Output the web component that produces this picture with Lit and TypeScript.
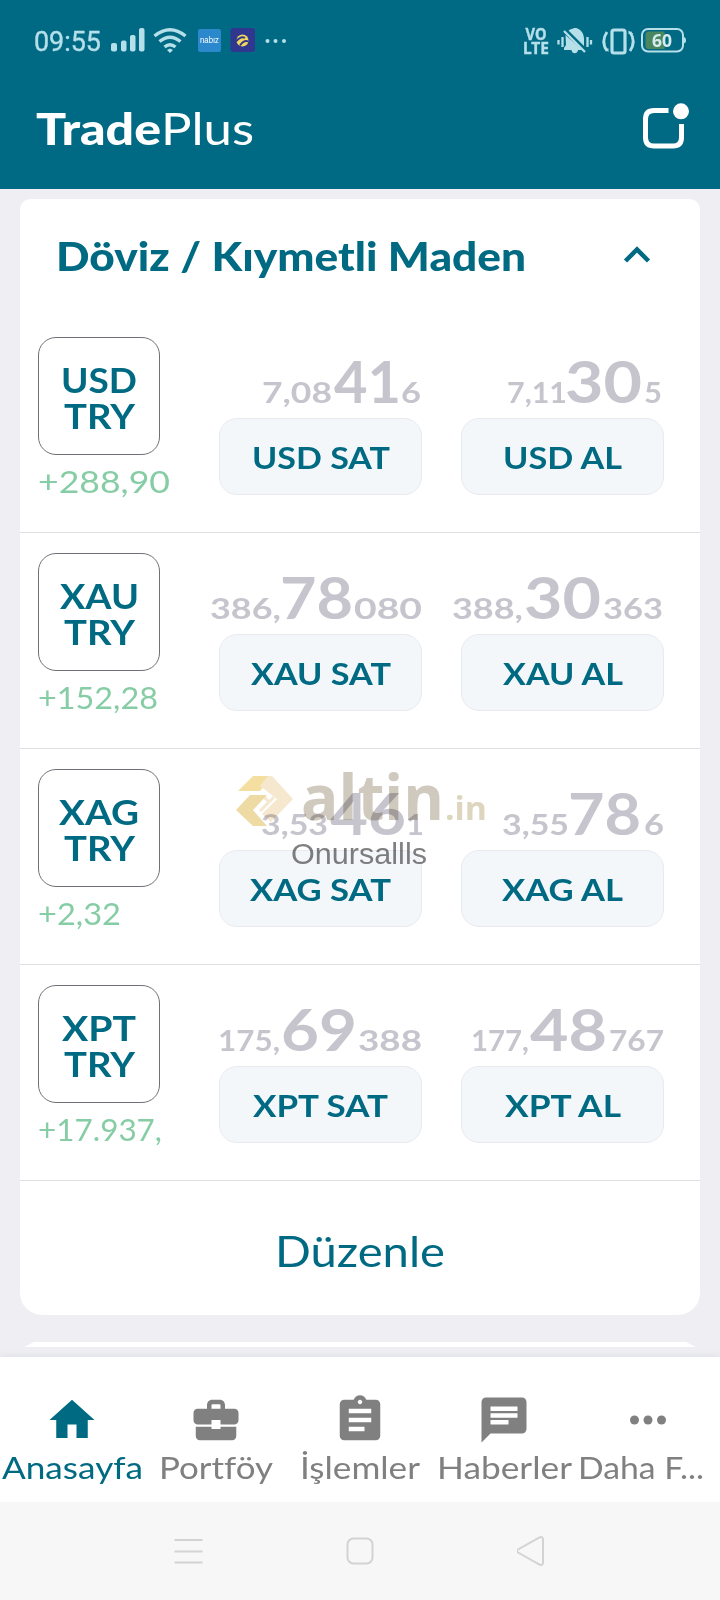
import { LitElement, html, svg, css } from "lit";
import { customElement, property } from "lit/decorators.js";

type Run = [text: string, x: number, width: number];

interface Pair {
  base: string;
  change: string;
  changeWidth: number;
  baseWidth: number;
  sell: Run[];
  buy: Run[];
  sellWidth: number;
  buyWidth: number;
}

// Run positions are measured from the left edge of the quote column.
const PAIRS: Pair[] = [
  {
    base: "USD", baseWidth: 76, change: "+288,90", changeWidth: 132, sellWidth: 138, buyWidth: 119,
    sell: [["7,08", 62, 70], ["41", 134, 67], ["6", 201, 20]],
    buy: [["7,11", 65, 60], ["30", 123, 77], ["5", 202, 18]],
  },
  {
    base: "XAU", baseWidth: 79, change: "+152,28", changeWidth: 120, sellWidth: 140, buyWidth: 120,
    sell: [["386,", 10, 71], ["78", 80, 73], ["080", 154, 68]],
    buy: [["388,", 10, 71], ["30", 82, 77], ["363", 161, 60]],
  },
  {
    base: "XAG", baseWidth: 80, change: "+2,32", changeWidth: 83, sellWidth: 141, buyWidth: 121,
    sell: [["3,53", 61, 67], ["46", 130, 76], ["1", 206, 18]],
    buy: [["3,55", 60, 67], ["78", 126, 73], ["6", 202, 20]],
  },
  {
    base: "XPT", baseWidth: 74, change: "+17.937,", changeWidth: 124, sellWidth: 135, buyWidth: 116,
    sell: [["175,", 18, 62], ["69", 81, 76], ["388", 158, 64]],
    buy: [["177,", 29, 58], ["48", 88, 77], ["767", 167, 55]],
  },
];

const TABS = [
  { name: "Anasayfa", width: 141, icon: svg`<path d="M10 20v-6h4v6h5v-8h3L12 3 2 12h3v8z"/>` },
  { name: "Portföy", width: 114, icon: svg`<path d="M10 16v-1H3l.01 4.2c0 1 .8 1.8 1.8 1.8h14.4c1 0 1.8-.8 1.8-1.8V15h-7v1zM20.2 7H16V5.6C16 4 15.2 3 13.6 3h-3.2C8.800 3 8 4 8 5.600V7H3.800C2.800 7 2 7.800 2 8.800v3.300c0 1.050.850 1.900 1.900 1.900H10v-2h4v2h6.100c1.050 0 1.900-.850 1.900-1.900V8.800C22 7.800 21.200 7 20.200 7zM14 7h-4V5.700c0-.500.200-.700.700-.700h2.600c.500 0 .700.200.700.700z"/>` },
  { name: "İşlemler", width: 120, icon: svg`<path d="M19 3h-4.180C14.400 1.840 13.300 1 12 1s-2.400.840-2.820 2H5c-1.100 0-2 .900-2 2v14c0 1.100.900 2 2 2h14c1.100 0 2-.900 2-2V5c0-1.100-.900-2-2-2zm-7 0c.550 0 1 .450 1 1s-.450 1-1 1-1-.450-1-1 .450-1 1-1zm2 14H7v-2h7v2zm3-4H7v-2h10v2zm0-4H7V7h10v2z"/>` },
  { name: "Haberler", width: 135, icon: svg`<path d="M20 2H4c-1.100 0-2 .900-2 2v18l4-4h14c1.100 0 2-.900 2-2V4c0-1.100-.900-2-2-2zM6 6h12v2H6zm8 8H6v-2h8zm4-3H6V9h12z"/>` },
  { name: "Daha F...", width: 126, icon: svg`<circle cx="6" cy="12" r="2"/><circle cx="12" cy="12" r="2"/><circle cx="18" cy="12" r="2"/>` },
];

/** A single line of text set to an exact measure. */
@customElement("fit-label")
class FitLabel extends LitElement {
  @property() text = "";
  @property({ type: Number }) measure = 0;
  @property({ type: Number }) size = 30;
  @property({ type: Number }) line = 36;

  static styles = css`
    :host { display: block; line-height: 0; }
    svg { display: block; overflow: visible; fill: currentColor; font-variant-ligatures: none; }
  `;

  render() {
    return html`<svg width=${this.measure} height=${this.line}>
      <text x="0" y=${this.line * 0.5 + this.size * 0.36} font-size=${this.size}
        textLength=${this.measure} lengthAdjust="spacingAndGlyphs">${this.text}</text>
    </svg>`;
  }
}

@customElement("quote-side")
class QuoteSide extends LitElement {
  @property({ attribute: false }) runs: Run[] = [];
  @property() label = "";
  @property({ type: Number }) measure = 0;

  static styles = css`
    :host { display: flex; flex-direction: column; width: 226px; }
    .price { display: block; overflow: visible; fill: #c6c5cd; font-weight: 700; }
    .small { font-size: 29px; }
    .big { font-size: 57px; }
    .action {
      box-sizing: border-box; width: 203px; height: 77px; margin: 13px 0 0 19px; padding: 2px 0 0;
      display: flex; align-items: center; justify-content: center;
      border: 1px solid #e9eaf1; border-radius: 18px; background: #f4f7fa;
      color: #006a83; font-family: inherit; font-weight: 700;
    }
  `;

  render() {
    return html`
      <svg class="price" width="226" height="48">
        ${this.runs.map(([text, x, width], i) => svg`
          <text class=${i === 1 ? "big" : "small"} x=${x} y="46" textLength=${width}
            lengthAdjust="spacingAndGlyphs">${text}</text>`)}
      </svg>
      <button class="action">
        <fit-label text=${this.label} measure=${this.measure} size="31" line="36"></fit-label>
      </button>`;
  }
}

@customElement("app-root")
class AppRoot extends LitElement {
  static styles = css`
    :host {
      display: flex; flex-direction: column; position: relative; overflow: hidden;
      width: 720px; height: 1600px; background: #eeeef3;
      font-family: Lato, "Open Sans", sans-serif; color: #006a83;
    }
    svg { display: block; }
    .top { height: 189px; background: #006a85; flex: none; }
    .status { display: flex; justify-content: space-between; height: 80px; }
    .status-icons { fill: #b5dfe9; stroke: none; }
    .clock { font: 27px Roboto, sans-serif; stroke: #b5dfe9; stroke-width: 0.4px; }
    .tiny { font: 9px "Liberation Sans", sans-serif; fill: #fff; }
    .volte { font: 700 16.500px "Noto Sans", sans-serif; stroke: #b5dfe9; stroke-width: 0.4px; }
    .level { font: 700 18px "Noto Sans", sans-serif; fill: #d5ecee; }
    .bar { display: flex; justify-content: space-between; align-items: center; padding: 0 28px 0 36px; height: 98px; }
    .brand { display: flex; color: #fff; }
    .brand-bold { font-weight: 900; }
    .inbox { margin-bottom: 6px; }
    .feed { flex: none; height: 1168px; padding: 10px 20px 0; box-sizing: border-box; overflow: hidden; }
    .card { height: 1116px; background: #fff; border-radius: 10px 10px 22px 22px; position: relative; }
    .next { height: 5px; margin-top: 27px; background: #fff; clip-path: polygon(14px 0, 666px 0, 676px 5px, 4px 5px); }
    .title { display: flex; justify-content: space-between; align-items: center; height: 118px; padding: 0 47px 2px 36px; box-sizing: border-box; font-weight: 900; }
    .title svg { margin-bottom: 3px; }
    .row { display: flex; box-sizing: border-box; height: 216px; padding: 20px 0 0 18px; border-bottom: 1.500px solid #dedfe2; }
    .pair { width: 142px; margin-right: 20px; color: #86cda5; }
    .symbol {
      box-sizing: border-box; width: 122px; height: 118px; margin-bottom: 10px; padding-top: 4px;
      display: flex; flex-direction: column; align-items: center; justify-content: center;
      border: 1px solid #707176; border-radius: 18px; color: #006a83; font-weight: 700;
    }
    .quotes { display: flex; gap: 16px; padding-top: 20px; }
    .edit { display: flex; align-items: center; justify-content: center; height: 134px; padding-top: 8px; box-sizing: border-box; }
    .watermark { position: absolute; left: 234px; top: 766px; mix-blend-mode: multiply; overflow: visible; }
    .wm-name { font: 700 62.500px "Open Sans", sans-serif; fill: #d0c9be; }
    .wm-suffix { font: 700 33px "Open Sans", sans-serif; fill: #ded5bf; }
    .wm-user { font: 30px "Liberation Sans", sans-serif; fill: #808080; }
    .tabs { flex: none; display: flex; height: 145px; background: #fff; box-shadow: 0 -1px 6px #dedee6; position: relative; }
    .tab { width: 144px; display: flex; flex-direction: column; align-items: center; padding-top: 36px; box-sizing: border-box; color: #808080; }
    .tab:last-child fit-label { margin-left: -15px; }
    .tab fit-label { padding-top: 1px; }
    .tab svg { fill: currentColor; }
    .active { color: #006a83; }
    .system { display: flex; flex: 1; justify-content: space-between; align-items: center; padding: 0 173px; background: #f7f7f7; position: relative; z-index: 1; }
    .system svg { fill: none; stroke: #d3d3d3; stroke-width: 2; }
  `;

  private status() {
    return html`<div class="status">
      <svg class="status-icons" width="300" height="80">
        <text class="clock" x="34" y="51" textLength="67" lengthAdjust="spacingAndGlyphs">09:55</text>
        <rect x="111" y="43" width="6" height="8.500" rx="2"/><rect x="121" y="40.500" width="5.500" height="11" rx="2"/>
        <rect x="130" y="35" width="5.500" height="16.500" rx="2"/><rect x="139" y="28" width="5.500" height="23.500" rx="2"/>
        <g fill="none" stroke="#b5dfe9" stroke-width="3.400">
          <path d="M154.500 36q15.500-12.500 31 0"/><path d="M159.500 41.500q10.500-8.500 21 0"/><path d="M164.500 47q5.500-4.500 11 0"/>
        </g>
        <path d="M167 50l3-1.500 3 1.500-3 3z"/>
        <rect x="198" y="29" width="23" height="23" rx="2" fill="#2c88cd"/>
        <text class="tiny" x="200" y="42.500" textLength="19" lengthAdjust="spacingAndGlyphs">nabız</text>
        <rect x="230.500" y="28" width="24.500" height="24" rx="3" fill="#2f378e"/>
        <circle cx="242.500" cy="40.500" r="6" fill="#f4d85c"/>
        <path d="M236 41.500q5-6 9-3.500M240 45.500q4-6 8.500-4" fill="none" stroke="#2f378e" stroke-width="1.800"/>
        <circle cx="267.500" cy="41" r="2"/><circle cx="275.500" cy="41" r="2"/><circle cx="284" cy="41" r="2"/>
      </svg>
      <svg class="status-icons" width="210" height="80" viewBox="510 0 210 80">
        <text class="volte" x="525.500" y="40" textLength="21" lengthAdjust="spacingAndGlyphs">VO</text>
        <text class="volte" x="523" y="53.500" textLength="26" lengthAdjust="spacingAndGlyphs">LTE</text>
        <path d="M568.500 30.500L584 46V39c0-5-2.500-8.500-6-10.200-1-1.200-4.500-1.200-5.500 0-1.500.400-3 .900-4 1.700zM565.500 35l17 15h-4.500c-.500 4.300-6 4.300-6.500 0h-7.500v-2l2-3z"/>
        <path d="M564 31l21 21M558.500 40v4.500M562.500 37v10M587.500 37v10M591 40v4.500" fill="none" stroke="#b5dfe9" stroke-width="2.300"/>
        <rect x="612" y="30" width="13" height="23" rx="2" fill="none" stroke="#b5dfe9" stroke-width="3.200"/>
        <path d="M607 32q-6.500 9.500 0 19M630 32q6.500 9.500 0 19" fill="none" stroke="#b5dfe9" stroke-width="2.800"/>
        <path d="M603.500 48.500h5v3.500zM633.500 34h-5v-3.500z"/>
        <path d="M649 31.500h15.500v17.500H649q-3.500 0-3.500-3.500v-10.500q0-3.500 3.500-3.500z" fill="#4a8761"/>
        <rect x="642" y="29" width="41" height="22.500" rx="6" fill="none" stroke="#b5dfe9" stroke-width="2"/>
        <path d="M683 37q3 0 3 3.200t-3 3.200z"/>
        <text class="level" x="652" y="46.500" textLength="20" lengthAdjust="spacingAndGlyphs">60</text>
      </svg>
    </div>`;
  }

  render() {
    return html`
      <header class="top">
        ${this.status()}
        <div class="bar">
          <div class="brand">
            <fit-label class="brand-bold" text="Trade" measure="125" size="44" line="50"></fit-label>
            <fit-label text="Plus" measure="93" size="44" line="50"></fit-label>
          </div>
          <svg class="inbox" width="52" height="52" viewBox="640 100 52 52">
            <path d="M668.500 110.500H654q-8.500 0-8.500 8.500v18.500q0 8.500 8.500 8.500h19q8.500 0 8.500-8.500V124" fill="none" stroke="#fff" stroke-width="5"/>
            <circle cx="681" cy="111.300" r="8" fill="#fff"/>
          </svg>
        </div>
      </header>
      <main class="feed">
        <section class="card">
          <div class="title">
            <fit-label text="Döviz / Kıymetli Maden" measure="470" size="40" line="50"></fit-label>
            <svg width="32" height="30" viewBox="621 240 32 30">
              <path d="M625.500 260L637 248.500 648.500 260" fill="none" stroke="#006a83" stroke-width="4.500"/>
            </svg>
          </div>
          ${PAIRS.map((p) => html`<div class="row">
            <div class="pair">
              <div class="symbol">
                <fit-label text=${p.base} measure=${p.baseWidth} size="35" line="36"></fit-label>
                <fit-label text="TRY" measure="71" size="35" line="36"></fit-label>
              </div>
              <fit-label text=${p.change} measure=${p.changeWidth} size="31" line="34"></fit-label>
            </div>
            <div class="quotes">
              <quote-side .runs=${p.sell} label="${p.base} SAT" measure=${p.sellWidth}></quote-side>
              <quote-side .runs=${p.buy} label="${p.base} AL" measure=${p.buyWidth}></quote-side>
            </div>
          </div>`)}
          <div class="edit"><fit-label text="Düzenle" measure="170" size="43" line="50"></fit-label></div>
        </section>
        <section class="next"></section>
      </main>
      <nav class="tabs">
        ${TABS.map((t, i) => html`<div class="tab ${i === 0 ? "active" : ""}">
          <svg width="54" height="54" viewBox="0 0 24 24">${t.icon}</svg>
          <fit-label text=${t.name} measure=${t.width} size="30" line="40"></fit-label>
        </div>`)}
      </nav>
      <footer class="system">
        <svg width="30" height="32" viewBox="173 1535 30 32"><path d="M174.500 1540h28M174.500 1551.500h28M174.500 1562.500h28"/></svg>
        <svg width="30" height="32" viewBox="345 1535 30 32"><rect x="347.500" y="1538.500" width="25" height="25" rx="6"/></svg>
        <svg width="30" height="32" viewBox="517 1535 30 32"><path d="M518 1549.500q-2 1.500 0 3l21.500 12q3.500 1.500 3.500-2v-23q0-3.500-3.500-2z"/></svg>
      </footer>
      <svg class="watermark" width="260" height="105" viewBox="234 766 260 105">
        <path d="M238 791l15-15h19l-12 15z" fill="#f5dfa0"/>
        <path d="M268 776h4l21 23-22 23-9-8 15-15-17-13z" fill="#f5e8cf"/>
        <path d="M264 797l5 5-9 9M274 797l-13 13" fill="none" stroke="#f5e8cf" stroke-width="3"/>
        <path d="M236 810l14-15h17l-14 15 14 16h-14z" fill="#eedaa3"/>
        <text class="wm-name" x="301" y="820" textLength="143" lengthAdjust="spacingAndGlyphs">altin</text>
        <text class="wm-suffix" x="445" y="820" textLength="42" lengthAdjust="spacingAndGlyphs">.in</text>
        <text class="wm-user" x="291" y="864" textLength="136" lengthAdjust="spacingAndGlyphs">Onursallls</text>
      </svg>`;
  }
}
